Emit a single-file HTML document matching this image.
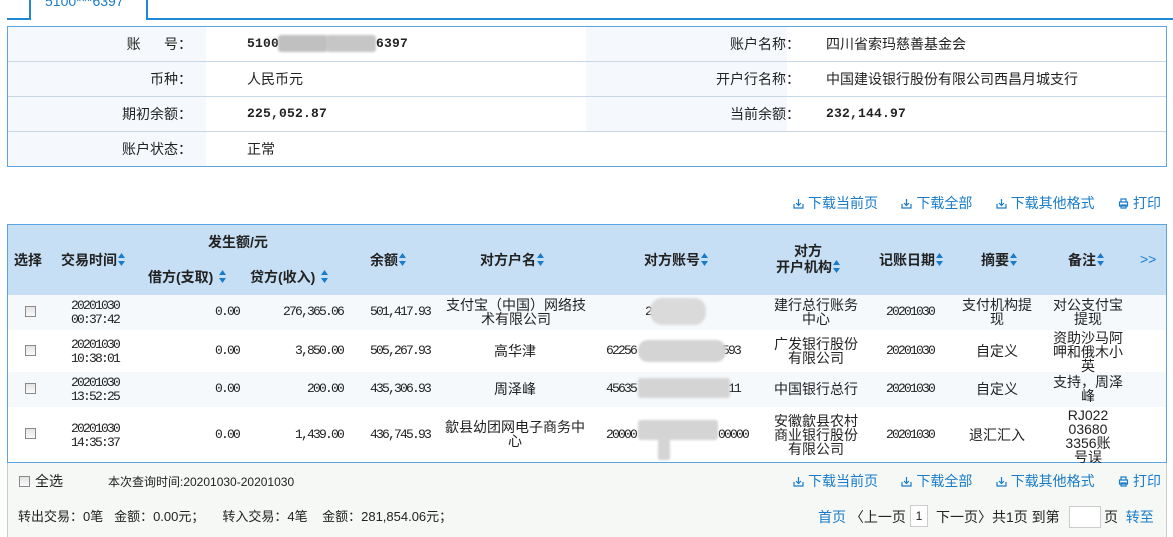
<!DOCTYPE html>
<html><head><meta charset="utf-8">
<style>
*{margin:0;padding:0;box-sizing:border-box}
body{width:1173px;height:537px;background:#fff;position:relative;overflow:hidden;font-family:"Liberation Sans","Noto Sans CJK SC",sans-serif;font-size:14px;line-height:18px;color:#222}
.a{position:absolute;white-space:nowrap}
.m{font-family:"Liberation Mono",monospace;font-size:13px;letter-spacing:-1.8px;line-height:18px}
.mb{font-family:"Liberation Mono",monospace;font-size:13px;font-weight:bold;letter-spacing:0.2px;line-height:18px}
.b{font-weight:bold}
.c{text-align:center}
.r{text-align:right}
.blue{color:#1a7cc9}
.arr{display:inline-block;width:7px;height:14px;vertical-align:-2px;margin-left:1px}
.lk{color:#1a7cc9;font-size:14px;word-spacing:0}
.ic{display:inline-block;width:11px;height:11px;vertical-align:-1px;margin-right:4px}
.cb{position:absolute;width:11px;height:11px;border:1px solid #8a8a8a;background:linear-gradient(#e4e4e4,#fafafa)}
.blur{position:absolute;background:#d4d4d4;border-radius:8px;filter:blur(1px)}
.cell{position:absolute;text-align:center;line-height:14px;font-size:14px}
.mc{position:absolute;text-align:center;font-family:"Liberation Mono",monospace;font-size:13px;letter-spacing:-1.8px;line-height:14px}
</style></head><body>
<div class="a" style="left:7px;top:18px;width:24px;height:2px;background:#1e88d2"></div>
<div class="a" style="left:29px;top:0;width:2px;height:20px;background:#1e88d2"></div>
<div class="a" style="left:146px;top:0;width:2px;height:20px;background:#1e88d2"></div>
<div class="a" style="left:146px;top:18px;width:1027px;height:2px;background:#1e88d2"></div>
<div class="a blue" style="left:45px;top:-8px;font-size:14px">5100***6397</div>

<div class="a" style="left:7px;top:26px;width:1160px;height:141px;border:1px solid #5ba4e0;background:#fff"></div>
<div class="a" style="left:8px;top:27px;width:198px;height:139px;background:#f5f9fd"></div>
<div class="a" style="left:586px;top:27px;width:201px;height:105px;background:#f5f9fd"></div>
<div class="a" style="left:8px;top:61px;width:1158px;height:1px;background:#c9d8e6"></div>
<div class="a" style="left:8px;top:96px;width:1158px;height:1px;background:#c9d8e6"></div>
<div class="a" style="left:8px;top:131px;width:1158px;height:1px;background:#c9d8e6"></div>
<div class="a r" style="left:90px;top:35px;width:102px">账&nbsp;&nbsp;&nbsp;&nbsp;&nbsp;&nbsp;号：</div>
<div class="a r" style="left:90px;top:70px;width:102px">币种：</div>
<div class="a r" style="left:90px;top:105px;width:102px">期初余额：</div>
<div class="a r" style="left:90px;top:140px;width:102px">账户状态：</div>
<div class="a mb" style="left:247px;top:35px">5100</div>
<div class="blur" style="left:278px;top:35px;width:50px;height:17px;background:#c0c0c0;border-radius:3px"></div>
<div class="blur" style="left:326px;top:35px;width:50px;height:17px;background:#c6c6c6;border-radius:3px"></div>
<div class="a mb" style="left:376px;top:35px">6397</div>
<div class="a" style="left:247px;top:70px">人民币元</div>
<div class="a mb" style="left:247px;top:105px">225,052.87</div>
<div class="a" style="left:247px;top:140px">正常</div>
<div class="a r" style="left:670px;top:35px;width:130px">账户名称：</div>
<div class="a r" style="left:670px;top:70px;width:130px">开户行名称：</div>
<div class="a r" style="left:670px;top:105px;width:130px">当前余额：</div>
<div class="a" style="left:826px;top:35px">四川省索玛慈善基金会</div>
<div class="a" style="left:826px;top:70px">中国建设银行股份有限公司西昌月城支行</div>
<div class="a mb" style="left:826px;top:105px">232,144.97</div>

<div class="a lk" style="left:793px;top:194px">
<svg class="ic" viewBox="0 0 11 11"><path d="M5.5 1v6M3 5l2.5 2.5L8 5M1 6v4h9V6" fill="none" stroke="#1a7cc9" stroke-width="1.2"/></svg>下载当前页&nbsp;&nbsp;&nbsp;&nbsp;&nbsp;&nbsp;<svg class="ic" viewBox="0 0 11 11"><path d="M5.5 1v6M3 5l2.5 2.5L8 5M1 6v4h9V6" fill="none" stroke="#1a7cc9" stroke-width="1.2"/></svg>下载全部&nbsp;&nbsp;&nbsp;&nbsp;&nbsp;&nbsp;<svg class="ic" viewBox="0 0 11 11"><path d="M5.5 1v6M3 5l2.5 2.5L8 5M1 6v4h9V6" fill="none" stroke="#1a7cc9" stroke-width="1.2"/></svg>下载其他格式&nbsp;&nbsp;&nbsp;&nbsp;&nbsp;&nbsp;<svg class="ic" viewBox="0 0 11 11"><path d="M3 4V1h5v3M1.5 4h8v4h-8zM3 7h5v3H3z" fill="none" stroke="#1a7cc9" stroke-width="1.2"/></svg>打印</div>

<div class="a" style="left:7px;top:224px;width:1160px;height:240px;border:1px solid #5ba4e0;border-bottom:none"></div>
<div class="a" style="left:8px;top:225px;width:1158px;height:70px;background:#c6dff5"></div>
<div class="a" style="left:8px;top:295px;width:1158px;height:35px;background:#f5f9fc"></div>
<div class="a" style="left:8px;top:372px;width:1158px;height:35px;background:#f5f9fc"></div>
<div class="a" style="left:7px;top:462px;width:1160px;height:1px;background:#5ba4e0"></div>

<svg width="0" height="0" style="position:absolute"><defs><g id="ar"><path d="M3.5 0L7 5H0z M0 8h7L3.5 13z" fill="#1a7cc9"/></g></defs></svg>
<div class="a b" style="left:14px;top:251px">选择</div>
<div class="a b" style="left:61px;top:251px">交易时间<svg class="arr" viewBox="0 0 7 14"><use href="#ar"/></svg></div>
<div class="a b" style="left:208px;top:233px">发生额/元</div>
<div class="a b" style="left:148px;top:268px">借方(支取)<svg class="arr" style="margin-left:6px" viewBox="0 0 7 14"><use href="#ar"/></svg></div>
<div class="a b" style="left:250px;top:268px">贷方(收入)<svg class="arr" style="margin-left:6px" viewBox="0 0 7 14"><use href="#ar"/></svg></div>
<div class="a b" style="left:370px;top:251px">余额<svg class="arr" viewBox="0 0 7 14"><use href="#ar"/></svg></div>
<div class="a b" style="left:480px;top:251px">对方户名<svg class="arr" viewBox="0 0 7 14"><use href="#ar"/></svg></div>
<div class="a b" style="left:644px;top:251px">对方账号<svg class="arr" viewBox="0 0 7 14"><use href="#ar"/></svg></div>
<div class="a b c" style="left:776px;top:243px;line-height:16px">对方<br>开户机构<svg class="arr" viewBox="0 0 7 14"><use href="#ar"/></svg></div>
<div class="a b" style="left:879px;top:251px">记账日期<svg class="arr" viewBox="0 0 7 14"><use href="#ar"/></svg></div>
<div class="a b" style="left:981px;top:251px">摘要<svg class="arr" viewBox="0 0 7 14"><use href="#ar"/></svg></div>
<div class="a b" style="left:1068px;top:251px">备注<svg class="arr" viewBox="0 0 7 14"><use href="#ar"/></svg></div>
<div class="a blue" style="left:1140px;top:250px;font-size:14px">&gt;&gt;</div>

<div class="cb" style="left:25px;top:306px"></div>
<div class="cb" style="left:25px;top:345px"></div>
<div class="cb" style="left:25px;top:383px"></div>
<div class="cb" style="left:25px;top:428px"></div>

<div class="mc" style="left:55px;top:299px;width:80px">20201030<br>00:37:42</div>
<div class="mc" style="left:55px;top:338px;width:80px">20201030<br>10:38:01</div>
<div class="mc" style="left:55px;top:376px;width:80px">20201030<br>13:52:25</div>
<div class="mc" style="left:55px;top:422px;width:80px">20201030<br>14:35:37</div>

<div class="a m r" style="left:150px;top:303px;width:89px">0.00</div>
<div class="a m r" style="left:150px;top:342px;width:89px">0.00</div>
<div class="a m r" style="left:150px;top:380px;width:89px">0.00</div>
<div class="a m r" style="left:150px;top:426px;width:89px">0.00</div>
<div class="a m r" style="left:240px;top:303px;width:103px">276,365.06</div>
<div class="a m r" style="left:240px;top:342px;width:103px">3,850.00</div>
<div class="a m r" style="left:240px;top:380px;width:103px">200.00</div>
<div class="a m r" style="left:240px;top:426px;width:103px">1,439.00</div>
<div class="a m r" style="left:340px;top:303px;width:90px">501,417.93</div>
<div class="a m r" style="left:340px;top:342px;width:90px">505,267.93</div>
<div class="a m r" style="left:340px;top:380px;width:90px">435,306.93</div>
<div class="a m r" style="left:340px;top:426px;width:90px">436,745.93</div>

<div class="cell" style="left:440px;top:298px;width:152px;white-space:normal">支付宝（中国）网络技术有限公司</div>
<div class="cell" style="left:440px;top:344px;width:150px">高华津</div>
<div class="cell" style="left:440px;top:382px;width:150px">周泽峰</div>
<div class="cell" style="left:440px;top:420px;width:150px;white-space:normal">歙县幼团网电子商务中心</div>

<div class="a m" style="left:645px;top:303px">21</div>
<div class="blur" style="left:650px;top:298px;width:56px;height:27px;background:#dadada;border-radius:12px"></div>
<div class="a m" style="left:606px;top:342px">62256</div><div class="a m" style="left:722px;top:342px">593</div>
<div class="blur" style="left:638px;top:340px;width:88px;height:22px;border-radius:10px"></div>
<div class="a m" style="left:606px;top:380px">45635</div><div class="a m" style="left:728px;top:380px">11</div>
<div class="blur" style="left:638px;top:378px;width:92px;height:20px;border-radius:3px"></div>
<div class="a m" style="left:606px;top:426px">20000</div><div class="a m" style="left:718px;top:426px">00000</div>
<div class="blur" style="left:638px;top:420px;width:80px;height:20px;border-radius:3px"></div>
<div class="blur" style="left:658px;top:438px;width:12px;height:22px;border-radius:2px"></div>

<div class="cell" style="left:771px;top:298px;width:90px;white-space:normal">建行总行账务中心</div>
<div class="cell" style="left:771px;top:337px;width:90px;white-space:normal">广发银行股份有限公司</div>
<div class="cell" style="left:760px;top:382px;width:112px">中国银行总行</div>
<div class="cell" style="left:771px;top:414px;width:90px;white-space:normal">安徽歙县农村商业银行股份有限公司</div>

<div class="a m c" style="left:870px;top:303px;width:80px">20201030</div>
<div class="a m c" style="left:870px;top:342px;width:80px">20201030</div>
<div class="a m c" style="left:870px;top:380px;width:80px">20201030</div>
<div class="a m c" style="left:870px;top:426px;width:80px">20201030</div>

<div class="cell" style="left:958px;top:298px;width:78px;white-space:normal">支付机构提现</div>
<div class="cell" style="left:958px;top:344px;width:78px">自定义</div>
<div class="cell" style="left:958px;top:382px;width:78px">自定义</div>
<div class="cell" style="left:958px;top:428px;width:78px">退汇汇入</div>

<div class="cell" style="left:1050px;top:298px;width:76px;white-space:normal">对公支付宝提现</div>
<div class="cell" style="left:1050px;top:331px;width:76px;white-space:normal">资助沙马阿呷和俄木小英</div>
<div class="cell" style="left:1050px;top:375px;width:76px;white-space:normal">支持，周泽峰</div>
<div class="cell" style="left:1050px;top:408px;width:76px">RJ022<br>03680<br>3356账<br>号误</div>

<div class="a" style="left:7px;top:463px;width:1160px;height:74px;background:#f5f8f5;border-left:1px solid #ccc;border-right:1px solid #ccc"></div>
<div class="cb" style="left:19px;top:476px"></div>
<div class="a" style="left:35px;top:472px">全选</div>
<div class="a" style="left:108px;top:473px;font-size:12px">本次查询时间:20201030-20201030</div>
<div class="a lk" style="left:793px;top:472px">
<svg class="ic" viewBox="0 0 11 11"><path d="M5.5 1v6M3 5l2.5 2.5L8 5M1 6v4h9V6" fill="none" stroke="#1a7cc9" stroke-width="1.2"/></svg>下载当前页&nbsp;&nbsp;&nbsp;&nbsp;&nbsp;&nbsp;<svg class="ic" viewBox="0 0 11 11"><path d="M5.5 1v6M3 5l2.5 2.5L8 5M1 6v4h9V6" fill="none" stroke="#1a7cc9" stroke-width="1.2"/></svg>下载全部&nbsp;&nbsp;&nbsp;&nbsp;&nbsp;&nbsp;<svg class="ic" viewBox="0 0 11 11"><path d="M5.5 1v6M3 5l2.5 2.5L8 5M1 6v4h9V6" fill="none" stroke="#1a7cc9" stroke-width="1.2"/></svg>下载其他格式&nbsp;&nbsp;&nbsp;&nbsp;&nbsp;&nbsp;<svg class="ic" viewBox="0 0 11 11"><path d="M3 4V1h5v3M1.5 4h8v4h-8zM3 7h5v3H3z" fill="none" stroke="#1a7cc9" stroke-width="1.2"/></svg>打印</div>
<div class="a" style="left:18px;top:508px;font-size:13px">转出交易：0笔&nbsp;&nbsp;&nbsp;金额：0.00元；&nbsp;&nbsp;&nbsp;&nbsp;&nbsp;转入交易：4笔&nbsp;&nbsp;&nbsp;&nbsp;金额：281,854.06元；</div>
<div class="a" style="left:818px;top:508px;font-size:14px"><span class="blue">首页</span> 〈上一页</div>
<div class="a" style="left:910px;top:505px;width:18px;height:22px;border:1px solid #ccc;background:#fff;text-align:center;line-height:20px;font-size:12px">1</div>
<div class="a" style="left:936px;top:508px;font-size:14px">下一页〉共1页 到第</div>
<div class="a" style="left:1069px;top:506px;width:32px;height:22px;border:1px solid #ccc;background:#fff"></div>
<div class="a" style="left:1104px;top:508px;font-size:14px">页 <span class="blue">&nbsp;转至</span></div>
</body></html>
